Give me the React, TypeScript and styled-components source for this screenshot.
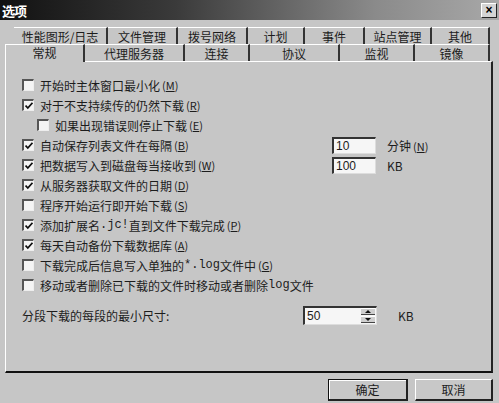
import React from 'react'
import styled, { createGlobalStyle } from 'styled-components'

const GlobalStyle = createGlobalStyle`
  html, body {
    margin: 0;
    padding: 0;
    background: #c6c6c6;
  }
  body {
    font-family: "Liberation Sans", "Noto Sans CJK SC", sans-serif;
    font-size: 12px;
    color: #1c1c1c;
  }
`

const Dialog = styled.div`
  width: 499px;
  height: 403px;
  display: flex;
  flex-direction: column;
  background: #c6c6c6;
  overflow: hidden;
`

const TitleBar = styled.div`
  height: 20px;
  display: flex;
  align-items: center;
  justify-content: space-between;
  padding: 0 2px 0 2px;
  background: linear-gradient(to right, #111 0%, #3a3a3a 35%, #8a8a8a 75%, #a8a8a8 100%);
`

const Title = styled.span`
  font-family: "Noto Sans CJK SC", sans-serif;
  font-weight: bold;
  font-size: 13px;
  color: #fff;
  letter-spacing: -1px;
`

const CloseButton = styled.div`
  width: 14px;
  height: 13px;
  display: flex;
  align-items: center;
  justify-content: center;
  background: #d4d4d4;
  border-top: 1px solid #fff;
  border-left: 1px solid #fff;
  border-right: 1px solid #222;
  border-bottom: 1px solid #222;
  font-weight: bold;
  font-size: 12px;
  line-height: 1;
  color: #000;
`

const TabArea = styled.div`
  padding-top: 7px;
  display: flex;
  flex-direction: column;
`

const TabRow = styled.div<{ $indent: number }>`
  display: flex;
  height: 17px;
  padding-left: ${p => p.$indent}px;
`

const Tab = styled.div<{ $w: number; $active?: boolean }>`
  width: ${p => p.$w}px;
  box-sizing: border-box;
  display: flex;
  align-items: center;
  justify-content: center;
  font-family: "Noto Sans CJK SC", sans-serif;
  font-size: 12px;
  border-top: 1px solid #fff;
  border-left: ${p => (p.$active ? '1px solid #fff' : 'none')};
  border-right: 2px solid #333;
  background: #c6c6c6;
  position: relative;
  z-index: ${p => (p.$active ? 2 : 1)};
  padding-bottom: ${p => (p.$active ? '3px' : '0')};
  margin-bottom: ${p => (p.$active ? '-1px' : '0')};
  height: ${p => (p.$active ? '18px' : '17px')};
`

const Panel = styled.div`
  margin: 0 6px 0 5px;
  height: 312px;
  box-sizing: border-box;
  border-top: 1px solid #fff;
  border-left: 1px solid #fff;
  border-right: 2px solid #222;
  border-bottom: 2px solid #111;
  padding: 13px 0 0 16px;
  display: flex;
  flex-direction: column;
`

const Row = styled.div<{ $indent?: number }>`
  height: 20px;
  display: flex;
  align-items: center;
  padding-left: ${p => p.$indent || 0}px;
`

const FieldRow = styled.div`
  height: 20px;
  display: grid;
  grid-template-columns: 299px 44px auto;
  column-gap: 11px;
  align-items: center;
`

const SizeRow = styled.div`
  margin-top: 10px;
  height: 20px;
  display: grid;
  grid-template-columns: 260px 74px auto;
  column-gap: 21px;
  align-items: center;
`

const Box = styled.span`
  width: 12px;
  height: 12px;
  box-sizing: border-box;
  flex: none;
  background: #f4f4f4;
  border-top: 2px solid #555;
  border-left: 2px solid #555;
  border-right: 1px solid #eee;
  border-bottom: 1px solid #eee;
  display: flex;
  align-items: center;
  justify-content: center;
  margin-right: 6px;
`

const Label = styled.span`
  font-family: "Noto Sans CJK SC", sans-serif;
  font-size: 12px;
  white-space: nowrap;
  display: flex;
  align-items: center;
`

const Key = styled.span`
  margin-left: 2px;
  font-size: 11px;
  & u {
    text-decoration: underline;
  }
`

const Mono = styled.span`
  font-family: "Liberation Mono", monospace;
  font-size: 12px;
`

const TextBox = styled.div`
  height: 17px;
  box-sizing: border-box;
  background: #f6f6f6;
  border-top: 2px solid #333;
  border-left: 2px solid #333;
  border-right: 1px solid #ddd;
  border-bottom: 1px solid #ddd;
  padding-left: 2px;
  display: flex;
  align-items: center;
  font-family: "Liberation Sans", sans-serif;
  font-size: 12px;
`

const Spinner = styled(TextBox)`
  height: 19px;
  justify-content: space-between;
  padding-right: 1px;
`

const SpinButtons = styled.div`
  width: 14px;
  height: 15px;
  display: flex;
  flex-direction: column;
  gap: 1px;
`

const SpinHalf = styled.div`
  flex: 1;
  background: #cfcfcf;
  border-top: 1px solid #fff;
  border-bottom: 1px solid #444;
  display: flex;
  align-items: center;
  justify-content: center;
`

const Unit = styled.span`
  font-family: "Noto Sans CJK SC", sans-serif;
  font-size: 12px;
`

const Footer = styled.div`
  flex: 1;
  display: flex;
  justify-content: flex-end;
  align-items: flex-start;
  gap: 7px;
  padding: 6px 6px 0 0;
`

const Button = styled.div<{ $default?: boolean; $w: number }>`
  width: ${p => p.$w}px;
  height: 22px;
  box-sizing: border-box;
  display: flex;
  align-items: center;
  justify-content: center;
  font-family: "Noto Sans CJK SC", sans-serif;
  font-size: 12px;
  background: #c8c8c8;
  border-top: 1px solid ${p => (p.$default ? '#111' : '#fff')};
  border-left: 1px solid ${p => (p.$default ? '#111' : '#fff')};
  border-right: 2px solid #222;
  border-bottom: 2px solid #222;
  box-shadow: ${p => (p.$default ? 'inset 1px 1px 0 #fff' : 'none')};
`

const Check = () => (
  <svg width="8" height="8" viewBox="0 0 8 8">
    <polyline points="0.5,3.5 2.8,6 7.5,0.8" fill="none" stroke="#111" strokeWidth="1.8" />
  </svg>
)

const CheckBox = ({ checked }: { checked?: boolean }) => <Box>{checked && <Check />}</Box>

const HotKey = ({ k }: { k: string }) => (
  <Key>
    (<u>{k}</u>)
  </Key>
)

const row1 = [
  ['性能图形/日志', 94],
  ['文件管理', 70],
  ['拨号网络', 70],
  ['计划', 57],
  ['事件', 60],
  ['站点管理', 67],
  ['其他', 58],
] as const

const row2 = [
  ['常规', 80],
  ['代理服务器', 100],
  ['连接', 65],
  ['协议', 90],
  ['监视', 75],
  ['镜像', 75],
] as const

export default function App() {
  return (
    <>
      <GlobalStyle />
      <Dialog>
        <TitleBar>
          <Title>选项</Title>
          <CloseButton>×</CloseButton>
        </TitleBar>
        <TabArea>
          <TabRow $indent={14}>
            {row1.map(([name, w]) => (
              <Tab key={name} $w={w}>{name}</Tab>
            ))}
          </TabRow>
          <TabRow $indent={5}>
            {row2.map(([name, w], i) => (
              <Tab key={name} $w={w} $active={i === 0}>{name}</Tab>
            ))}
          </TabRow>
        </TabArea>
        <Panel>
          <Row>
            <CheckBox />
            <Label>开始时主体窗口最小化<HotKey k="M" /></Label>
          </Row>
          <Row>
            <CheckBox checked />
            <Label>对于不支持续传的仍然下载<HotKey k="R" /></Label>
          </Row>
          <Row $indent={15}>
            <CheckBox />
            <Label>如果出现错误则停止下载<HotKey k="E" /></Label>
          </Row>
          <FieldRow>
            <Row>
              <CheckBox checked />
              <Label>自动保存列表文件在每隔<HotKey k="B" /></Label>
            </Row>
            <TextBox>10</TextBox>
            <Unit>分钟<HotKey k="N" /></Unit>
          </FieldRow>
          <FieldRow>
            <Row>
              <CheckBox checked />
              <Label>把数据写入到磁盘每当接收到<HotKey k="W" /></Label>
            </Row>
            <TextBox>100</TextBox>
            <Unit>KB</Unit>
          </FieldRow>
          <Row>
            <CheckBox checked />
            <Label>从服务器获取文件的日期<HotKey k="D" /></Label>
          </Row>
          <Row>
            <CheckBox />
            <Label>程序开始运行即开始下载<HotKey k="S" /></Label>
          </Row>
          <Row>
            <CheckBox checked />
            <Label>添加扩展名<Mono>.jc!</Mono>直到文件下载完成<HotKey k="P" /></Label>
          </Row>
          <Row>
            <CheckBox checked />
            <Label>每天自动备份下载数据库<HotKey k="A" /></Label>
          </Row>
          <Row>
            <CheckBox />
            <Label>下载完成后信息写入单独的<Mono>*.log</Mono>文件中<HotKey k="G" /></Label>
          </Row>
          <Row>
            <CheckBox />
            <Label>移动或者删除已下载的文件时移动或者删除<Mono>log</Mono>文件</Label>
          </Row>
          <SizeRow>
            <Label>分段下载的每段的最小尺寸:</Label>
            <Spinner>
              50
              <SpinButtons>
                <SpinHalf>
                  <svg width="6" height="3" viewBox="0 0 6 3"><polygon points="0,3 3,0 6,3" fill="#111" /></svg>
                </SpinHalf>
                <SpinHalf>
                  <svg width="6" height="3" viewBox="0 0 6 3"><polygon points="0,0 6,0 3,3" fill="#111" /></svg>
                </SpinHalf>
              </SpinButtons>
            </Spinner>
            <Unit>KB</Unit>
          </SizeRow>
        </Panel>
        <Footer>
          <Button $default $w={80}>确定</Button>
          <Button $w={78}>取消</Button>
        </Footer>
      </Dialog>
    </>
  )
}
